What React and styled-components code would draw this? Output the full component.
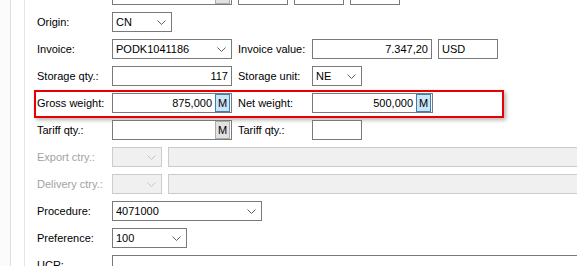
import React from "react";
import styled, { createGlobalStyle, css } from "styled-components";

const Global = createGlobalStyle`
  html, body { margin: 0; padding: 0; background: #ffffff; overflow: hidden; }
  body { font-family: "Liberation Sans", Arial, sans-serif; font-size: 11px; color: #000; }
`;

const Page = styled.div`
  display: flex;
  width: 577px;
  height: 266px;
  overflow: hidden;
  background: #ffffff;
`;

const OuterStrip = styled.div`
  flex: none;
  width: 10px;
  background: #fbfbfb;
  border-right: 1px solid #dedede;
`;

const InnerStrip = styled.div`
  flex: none;
  width: 13px;
  border-right: 1px solid #e6e6e6;
`;

const Form = styled.div`
  flex: 1;
  min-width: 0;
  display: flex;
  flex-direction: column;
  gap: 7px;
  margin-top: -15px;
  padding-left: 12px;
`;

const Row = styled.div`
  position: relative;
  display: flex;
  align-items: center;
  gap: 6px;
  height: 20px;
  flex: none;
`;

const Label = styled.div`
  flex: none;
  width: ${(p) => p.$w || 69}px;
  white-space: nowrap;
  color: ${(p) => (p.$disabled ? "#a2a2a2" : "#000")};
`;

const Box = styled.div`
  flex: none;
  box-sizing: border-box;
  width: ${(p) => p.$w}px;
  height: 20px;
  display: flex;
  align-items: center;
  justify-content: ${(p) => (p.$right ? "flex-end" : "flex-start")};
  gap: 3px;
  padding: 0 ${(p) => (p.$btn ? 1 : 3)}px 0 3px;
  border: 1px solid #7a7a7a;
  background: #ffffff;
  white-space: nowrap;
  ${(p) =>
    p.$disabled &&
    css`
      border-color: #cccccc;
      background: #f0f0f0;
    `}
`;

const Value = styled.span`
  flex: ${(p) => (p.$grow ? 1 : "none")};
  text-align: ${(p) => (p.$right ? "right" : "left")};
`;

const MButton = styled.div`
  flex: none;
  box-sizing: border-box;
  width: 15px;
  height: 18px;
  display: flex;
  align-items: center;
  justify-content: center;
  font-size: 11px;
  color: #000;
  border: 1px solid ${(p) => (p.$active ? "#3c7fb1" : "#adadad")};
  background: ${(p) => (p.$active ? "#cce4f7" : "#e1e1e1")};
`;

const Chevron = styled.svg`
  flex: none;
  margin-right: 2px;
  margin-left: auto;
`;

const Highlight = styled.div`
  position: absolute;
  left: -3px;
  top: -3px;
  width: 470px;
  height: 28px;
  box-sizing: border-box;
  border: 2px solid #e80000;
  box-shadow: 2px 2px 4px rgba(0, 0, 0, 0.3);
  pointer-events: none;
`;

const Arrow = ({ disabled }) => (
  <Chevron width="9" height="5" viewBox="0 0 9 5">
    <polyline
      points="0.5,0.5 4.5,4.5 8.5,0.5"
      fill="none"
      stroke={disabled ? "#c4c4c4" : "#606060"}
      strokeWidth="1"
    />
  </Chevron>
);

const Select = ({ w, value, disabled }) => (
  <Box $w={w} $disabled={disabled}>
    {value && <Value>{value}</Value>}
    <Arrow disabled={disabled} />
  </Box>
);

const Field = ({ w, value, right, button, buttonText = "M", active, disabled }) => (
  <Box $w={w} $right={right} $btn={!!button} $disabled={disabled}>
    {value !== undefined && (
      <Value $grow={!!button} $right={right}>
        {value}
      </Value>
    )}
    {button && <MButton $active={active}>{buttonText}</MButton>}
  </Box>
);

export default function App() {
  return (
    <>
      <Global />
      <Page>
        <OuterStrip />
        <InnerStrip />
        <Form>
          <Row>
            <Label />
            <Field w={120} value="" button buttonText="" />
            <Field w={50} />
            <Field w={50} />
            <Field w={50} />
          </Row>
          <Row>
            <Label>Origin:</Label>
            <Select w={60} value="CN" />
          </Row>
          <Row>
            <Label>Invoice:</Label>
            <Select w={120} value="PODK1041186" />
            <Label $w={68}>Invoice value:</Label>
            <Field w={120} value="7.347,20" right />
            <Field w={60} value="USD" />
          </Row>
          <Row>
            <Label>Storage qty.:</Label>
            <Field w={120} value="117" right />
            <Label $w={68}>Storage unit:</Label>
            <Select w={50} value="NE" />
          </Row>
          <Row>
            <Label>Gross weight:</Label>
            <Field w={120} value="875,000" right button active />
            <Label $w={68}>Net weight:</Label>
            <Field w={121} value="500,000" right button active />
            <Highlight />
          </Row>
          <Row>
            <Label>Tariff qty.:</Label>
            <Field w={120} value="" right button />
            <Label $w={68}>Tariff qty.:</Label>
            <Field w={50} />
          </Row>
          <Row>
            <Label $disabled>Export ctry.:</Label>
            <Select w={50} disabled />
            <Field w={420} disabled />
          </Row>
          <Row>
            <Label $disabled>Delivery ctry.:</Label>
            <Select w={50} disabled />
            <Field w={420} disabled />
          </Row>
          <Row>
            <Label>Procedure:</Label>
            <Select w={150} value="4071000" />
          </Row>
          <Row>
            <Label>Preference:</Label>
            <Select w={75} value="100" />
          </Row>
          <Row>
            <Label>UCR:</Label>
            <Field w={470} />
          </Row>
        </Form>
      </Page>
    </>
  );
}
